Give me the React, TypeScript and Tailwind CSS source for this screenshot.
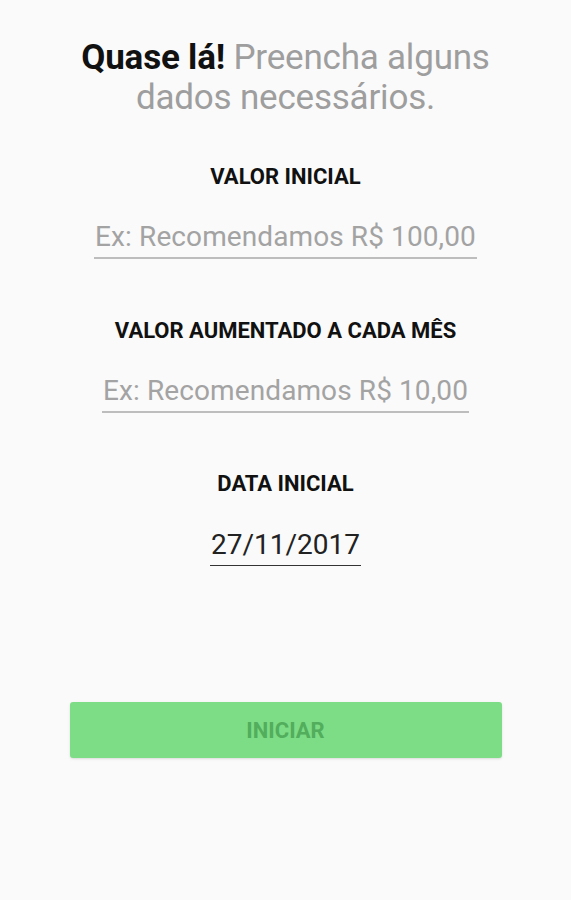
export default function App() {
  const fields = [
    { label: 'VALOR INICIAL', placeholder: 'Ex: Recomendamos R$ 100,00', gap: 'mt-[46px]' },
    { label: 'VALOR AUMENTADO A CADA MÊS', placeholder: 'Ex: Recomendamos R$ 10,00', gap: 'mt-[59px]' },
  ]

  return (
    <div
      className="w-[571px] h-[900px] bg-[#fafafa] flex flex-col items-center"
      style={{ fontFamily: 'Roboto, "Noto Sans", sans-serif' }}
    >
      {/* Title */}
      <h1 className="mt-[38px] text-center text-[35px] leading-[40px] text-[#9e9e9e] tracking-[-0.2px]">
        <span className="font-bold text-[#111]">Quase lá!</span> Preencha alguns
        <br />
        dados necessários.
      </h1>

      {/* Fields */}
      {fields.map((field, i) => (
        <div key={i} className={`flex flex-col items-center ${field.gap}`}>
          <label className="text-[22px] font-bold text-[#111] leading-[26px]">{field.label}</label>
          <div className="mt-[31px] border-b-2 border-[#bdbdbd] pb-[4px] px-[1px] text-[28px] leading-[32px] text-[#a3a3a3] tracking-[0.1px]">
            {field.placeholder}
          </div>
        </div>
      ))}

      <div className="flex flex-col items-center mt-[58px]">
        <label className="text-[22px] font-bold text-[#111] leading-[26px]">DATA INICIAL</label>
        <div className="mt-[32px] border-b border-[#333] pb-[4px] px-[1px] text-[28px] leading-[32px] text-[#222]">
          27/11/2017
        </div>
      </div>

      {/* Button */}
      <button className="mt-[136px] w-[432px] h-[56px] rounded-[3px] bg-[#7ddd86] shadow-sm text-[22px] font-bold text-[#52ad5c]">
        INICIAR
      </button>
    </div>
  )
}
